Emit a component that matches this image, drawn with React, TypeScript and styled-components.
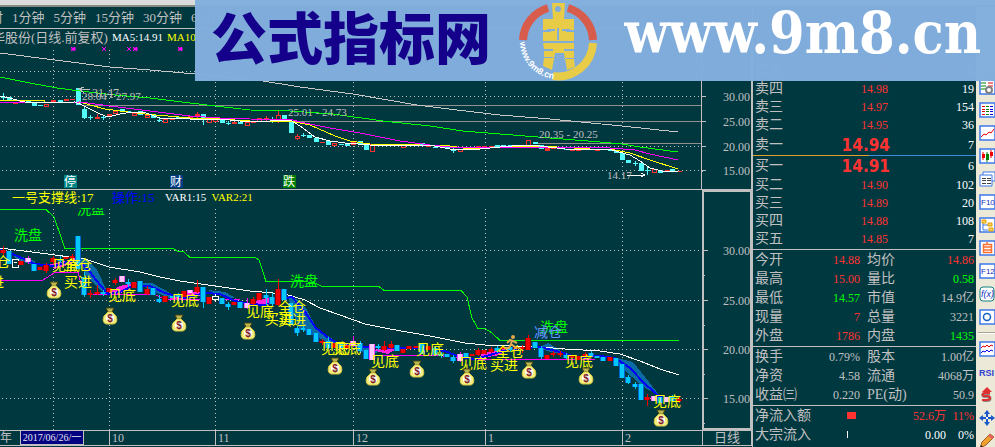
import React from "react";
import styled, { createGlobalStyle } from "styled-components";

const terminalFont = `"Liberation Serif", "Noto Sans CJK SC", serif`;
const bg = "#003840";
const line = "#c0c0c0";

const Global = createGlobalStyle`
  *, *::before, *::after { box-sizing: border-box; }
  html, body { margin: 0; background: ${bg}; }
  body { height: 100vh; overflow: hidden; font-family: ${terminalFont}; font-size: 12px; color: ${line}; }
`;

const Terminal = styled.main`
  position: relative;
  display: grid;
  grid-template-columns: minmax(0, 1fr) 224px 19px;
  grid-template-rows: 7px minmax(0, 1fr);
  height: 100vh;
  overflow: hidden;
  background: ${bg};
`;
const WindowEdge = styled.div`
  grid-column: 1 / -1;
  background: #dcdcdc;
  border-bottom: 2px solid #85897f;
`;
const ChartColumn = styled.section`
  min-width: 0;
`;

/* period toolbar and titles */
const Toolbar = styled.nav`
  display: flex;
  align-items: center;
  gap: 9px;
  height: 22px;
  overflow: hidden;
  border-bottom: 1px solid ${line};
`;
const PeriodButton = styled.button`
  flex: none;
  padding: 0;
  border: 0;
  background: none;
  color: ${line};
  font: 13px/20px ${terminalFont};
  white-space: nowrap;
  cursor: pointer;
  &:first-child { margin-left: -23px; }
`;
const StockTitle = styled.header`
  display: flex;
  gap: 4px;
  height: 17px;
  overflow: hidden;
  font-size: 11px;
  line-height: 17px;
  white-space: nowrap;
`;
const StockName = styled.h1`
  margin: 0 0 0 -8px;
  font: 13px/17px ${terminalFont};
`;
const Reading = styled.span<{ $color: string }>`
  color: ${(p) => p.$color};
`;
const IndicatorRow = styled.div`
  display: grid;
  grid-template-columns: minmax(0, 1fr) 50px;
  height: 19px;
  border-top: 1px solid ${line};
`;
const IndicatorTitle = styled.div`
  display: flex;
  gap: 5px;
  padding-left: 12px;
  overflow: hidden;
  font-size: 11px;
  line-height: 15px;
  white-space: nowrap;
`;
const IndicatorName = styled.span<{ $color: string; $w: number }>`
  min-width: ${(p) => p.$w}px;
  color: ${(p) => p.$color};
  font-size: 13px;
`;
const ScaleCap = styled.div`
  border: 2px solid ${line};
  border-bottom: 0;
`;
const Chart = styled.svg`
  display: block;
  width: 100%;
  height: auto;
  font-family: ${terminalFont};
`;

/* time axis */
const TimeAxis = styled.div`
  display: grid;
  grid-template-columns: 20fr 64fr 25fr 106fr 138fr 132fr 137fr 80fr 50px;
  height: 16px;
  border-top: 1px solid ${line};
  border-bottom: 1px solid ${line};
  font-size: 12px;
  line-height: 14px;
`;
const Month = styled.span<{ $line?: boolean }>`
  min-width: 0;
  padding-left: ${(p) => (p.$line ? "2px" : "0")};
  border-left: ${(p) => (p.$line ? `1px solid ${line}` : "0")};
  overflow: hidden;
`;
const CursorDate = styled.span`
  border: 1px solid ${line};
  border-top: 0;
  background: #000080;
  color: #e8e8f0;
  font-size: 10px;
  text-align: center;
  white-space: nowrap;
  overflow: hidden;
`;
const PeriodLabel = styled.span`
  border-left: 1px solid ${line};
  border-right: 1px solid ${line};
  text-align: center;
  font-size: 13px;
`;

/* quote panel */
const QuotePanel = styled.aside`
  padding-top: 55px;
  border-left: 1px solid ${line};
  overflow: hidden;
`;
const Group = styled.div`
  padding-bottom: 1px;
  border-bottom: 1px solid ${line};
`;
const Table = styled.table`
  width: 100%;
  table-layout: fixed;
  border-collapse: collapse;
`;
const Row = styled.tr<{ $h: number }>`
  height: ${(p) => p.$h}px;
`;
const Label = styled.th<{ $w?: string; $second?: boolean }>`
  width: ${(p) => p.$w || "auto"};
  padding: 0 0 0 ${(p) => (p.$second ? "5px" : "2px")};
  color: ${line};
  font: 14px/18px ${terminalFont};
  text-align: left;
  white-space: nowrap;
`;
const Value = styled.td<{ $color?: string; $w?: string; $big?: boolean }>`
  width: ${(p) => p.$w || "auto"};
  padding: 0 ${(p) => (p.$big ? "0" : "2px")} 0 0;
  color: ${(p) => p.$color || line};
  font: ${(p) => (p.$big ? `bold 17px/18px "DejaVu Sans Condensed", "DejaVu Sans", sans-serif` : `12px/18px ${terminalFont}`)};
  text-align: right;
  white-space: nowrap;
`;
const Pressure = styled.div`
  display: grid;
  grid-template-columns: 52fr 48fr;
  height: 1px;
`;
const PressurePart = styled.span<{ $color: string }>`
  background: ${(p) => p.$color};
`;
const FlowBar = styled.span<{ $w: number; $color: string }>`
  display: inline-block;
  width: ${(p) => p.$w}px;
  height: 7px;
  background: ${(p) => p.$color};
`;
const FlowCell = styled.td`
  width: 46px;
  padding: 0;
`;

/* tool rail */
const ToolRail = styled.nav`
  display: flex;
  flex-direction: column;
  align-items: flex-end;
  gap: 7px;
  padding-top: 72px;
  background: #ece9d8;
  overflow: hidden;
`;
const ToolButton = styled.button`
  flex: none;
  width: 16px;
  height: 16px;
  padding: 0;
  border: 0;
  background: none;
  cursor: pointer;
  svg { display: block; }
`;
const RailRule = styled.hr`
  flex: none;
  width: 17px;
  height: 2px;
  margin: 0;
  border: 0;
  border-top: 1px solid #a8a594;
  background: #fff;
`;

/* site banner */
const Banner = styled.a`
  position: absolute;
  top: 0;
  right: 0;
  left: 195px;
  display: flex;
  align-items: center;
  justify-content: space-between;
  height: 81px;
  padding: 0 14px 0 16px;
  overflow: hidden;
  background: rgba(130, 174, 221, 0.98);
  text-decoration: none;
  white-space: nowrap;
`;
const SiteName = styled.strong`
  margin-bottom: 12px;
  color: #14008a;
  font: 900 56px/60px "Noto Sans CJK SC", sans-serif;
`;
const SiteAddress = styled.strong`
  margin-bottom: 16px;
  color: #fff;
  font: bold 57px/60px "DejaVu Serif Condensed", "DejaVu Serif", serif;
`;

type Candle = [number, number, number, string, number?, number?];

const upperCandles: Candle[] = [
  [3, 97, 98, "c", 93, 100], [9, 97, 101, "c"], [15, 102, 104, "r"], [21, 100, 103, "r"], [28, 100, 103, "c"], [34, 102, 106, "c"],
  [40, 105, 106, "c"], [46, 104, 106, "o"], [53, 100, 103, "r"], [60, 100, 102, "c"], [66, 99, 101, "r"], [72, 99, 100, "r"],
  [78, 88, 105, "c"], [84, 109, 118, "c", 106, 119], [90, 117, 118, "c", 115, 120], [97, 117, 119, "r", 114, 119], [103, 117, 118, "c", 115, 120],
  [109, 114, 117, "r"], [115, 111, 113, "o"], [122, 109, 112, "c"], [128, 111, 113, "c"], [134, 113, 115, "o"], [140, 111, 115, "c"],
  [147, 115, 117, "o"], [153, 115, 118, "c"], [159, 120, 121, "c", 118, 122], [165, 119, 122, "o"], [172, 119, 120, "r"], [178, 117, 119, "c"],
  [184, 118, 119, "c"], [190, 116, 119, "r"], [197, 114, 117, "r", 112, 118], [203, 114, 120, "c", 114, 125], [209, 119, 122, "o"],
  [215, 119, 121, "o"], [222, 120, 123, "c"], [228, 123, 124, "c", 121, 125], [234, 122, 124, "r"], [240, 122, 124, "c"], [247, 122, 125, "o"],
  [253, 121, 123, "r"], [259, 118, 121, "o"], [266, 118, 120, "r", 116, 122], [272, 120, 121, "c", 117, 123], [278, 115, 120, "o", 111, 123],
  [284, 115, 121, "c"], [291, 121, 133, "c"], [297, 136, 138, "o", 134, 140], [303, 135, 136, "c", 133, 137], [309, 135, 138, "c"],
  [316, 138, 142, "c"], [322, 142, 143, "r"], [328, 141, 145, "c"], [334, 143, 145, "o"], [341, 144, 145, "c"], [347, 144, 146, "c"],
  [353, 142, 144, "o"], [360, 141, 145, "c"], [366, 145, 150, "c"], [372, 144, 151, "o"], [378, 145, 146, "c"], [384, 145, 146, "r"],
  [391, 144, 146, "r"], [397, 144, 146, "c"], [403, 145, 147, "o"], [409, 144, 146, "r"], [416, 144, 145, "c"], [422, 143, 146, "c"],
  [428, 145, 147, "r"], [435, 147, 148, "c"], [441, 146, 147, "r"], [447, 147, 148, "c"], [453, 150, 151, "c", 148, 153], [460, 149, 151, "o"],
  [466, 148, 149, "c"], [472, 147, 148, "c"], [478, 146, 147, "r"], [484, 146, 148, "r"], [491, 146, 148, "r"], [497, 145, 147, "c"],
  [503, 145, 147, "c"], [510, 145, 147, "c"], [516, 146, 147, "c"], [522, 145, 147, "r"], [528, 140, 145, "o"], [535, 142, 144, "c"],
  [541, 145, 149, "c"], [547, 148, 151, "r"], [553, 147, 149, "r"], [560, 148, 149, "r"], [566, 149, 150, "c"], [572, 149, 151, "r"],
  [578, 149, 151, "r"], [585, 149, 150, "r"], [591, 149, 150, "c"], [597, 149, 151, "r"], [603, 149, 150, "c"], [610, 149, 151, "c"],
  [616, 151, 153, "c"], [622, 153, 160, "c"], [628, 160, 163, "c"], [635, 163, 164, "c", 161, 166], [641, 163, 171, "c"],
  [647, 170, 171, "c", 167, 175], [654, 169, 172, "o"], [660, 171, 173, "c"], [667, 170, 172, "r"], [672, 169, 171, "c"], [679, 171, 172, "r"],
];

const lowerCandles: Candle[] = [
  [3, 250, 253, "r", 246, 255], [9, 251, 264, "c"], [15, 259, 268, "w"], [21, 261, 265, "r"], [28, 258, 262, "p", 256, 264], [34, 264, 271, "c"],
  [40, 267, 270, "r"], [46, 265, 271, "r", 263, 273], [53, 258, 262, "r", 256, 264], [60, 259, 261, "c", 256, 263], [66, 257, 259, "r"],
  [72, 256, 258, "r", 254, 260], [78, 236, 269, "c"], [84, 277, 295, "c", 272, 297], [90, 293, 295, "r", 290, 298], [97, 292, 294, "r", 285, 295],
  [103, 292, 294, "c", 290, 296], [109, 288, 292, "r"], [115, 280, 283, "r", 278, 285], [122, 276, 282, "p"], [128, 282, 284, "c", 279, 287],
  [134, 282, 288, "r"], [140, 281, 292, "c"], [147, 289, 294, "r", 286, 295], [153, 288, 295, "c"], [159, 299, 302, "c", 295, 303],
  [165, 296, 302, "r"], [172, 296, 298, "c"], [178, 295, 297, "c", 293, 300], [184, 291, 297, "r"], [190, 290, 293, "p"], [197, 287, 292, "r", 280, 293],
  [203, 287, 302, "c", 287, 308], [209, 297, 304, "r"], [215, 296, 300, "w", 294, 302], [222, 298, 304, "c"], [228, 304, 307, "c", 302, 310],
  [234, 302, 305, "r"], [240, 302, 308, "c"], [247, 303, 308, "p", 298, 309], [253, 299, 304, "r", 297, 305], [259, 293, 300, "r"],
  [266, 295, 298, "c", 289, 305], [272, 297, 304, "c", 293, 306], [278, 289, 305, "r", 279, 306], [284, 289, 300, "c"], [291, 303, 325, "c"],
  [297, 328, 333, "c", 326, 336], [303, 328, 330, "c", 326, 332], [309, 329, 335, "c"], [316, 333, 342, "c"], [322, 341, 343, "r", 339, 345],
  [328, 341, 348, "c", 337, 349], [334, 343, 348, "r"], [341, 343, 348, "c"], [347, 345, 349, "r"], [353, 341, 346, "p", 336, 347],
  [360, 343, 351, "c", 341, 353], [366, 350, 359, "c"], [372, 344, 360, "p"], [378, 346, 348, "c", 344, 350], [384, 346, 350, "r", 341, 351],
  [391, 344, 348, "r", 341, 349], [397, 345, 351, "c"], [403, 349, 353, "r"], [409, 346, 349, "r"], [416, 346, 348, "r"], [422, 344, 354, "c"],
  [428, 346, 350, "r"], [435, 348, 355, "c", 346, 356], [441, 354, 356, "c", 352, 358], [447, 354, 357, "c"], [453, 357, 361, "c", 355, 363],
  [460, 354, 361, "p", 352, 362], [466, 353, 357, "c"], [472, 354, 356, "r"], [478, 350, 355, "r", 348, 356], [484, 350, 354, "r"],
  [491, 349, 352, "r", 347, 353], [497, 348, 351, "c", 346, 353], [503, 347, 349, "r"], [510, 347, 350, "c", 345, 352], [516, 347, 349, "r"],
  [522, 347, 349, "r", 345, 353], [528, 338, 350, "r", 335, 350], [535, 342, 348, "c"], [541, 348, 357, "c", 346, 359], [547, 355, 359, "r"],
  [553, 353, 355, "r", 351, 357], [560, 353, 355, "r", 351, 357], [566, 355, 358, "c", 353, 359], [572, 356, 358, "r"], [578, 356, 360, "r"],
  [585, 354, 357, "r", 352, 358], [591, 353, 356, "c", 351, 357], [597, 356, 358, "c"], [603, 357, 361, "c"], [610, 357, 361, "r"],
  [616, 358, 366, "c"], [622, 364, 378, "c"], [628, 377, 383, "c", 375, 384], [635, 384, 387, "c", 382, 389], [641, 384, 400, "c"],
  [647, 397, 400, "r", 394, 406], [654, 396, 401, "p"], [660, 397, 403, "c"], [667, 397, 402, "p"], [672, 396, 401, "c", 395, 402], [679, 399, 401, "r", 397, 403],
];

const paint: Record<string, string> = { c: "#54fcfc", r: "#ff3232", o: "#ff3232" };
const lowerPaint: Record<string, string> = { c: "#00c8ff", r: "#f00000", p: "#ffc8ff", w: "#ffffff" };

const UpperCandle = ({ d: [x, top, bottom, kind, hi = top, lo = bottom] }: { d: Candle }) => (
  <g fill={paint[kind]}>
    <rect x={x} y={hi} width="1" height={lo - hi} />
    {kind === "o" ? (
      <rect x={x - 1.5} y={top + 0.5} width="4" height={bottom - top} fill={bg} stroke={paint.o} />
    ) : (
      <rect x={x - 2} y={top} width="5" height={Math.max(1, bottom - top)} />
    )}
  </g>
);

const LowerCandle = ({ d: [x, top, bottom, kind, hi = top, lo = bottom] }: { d: Candle }) => (
  <g fill={kind === "p" ? "#ff00ff" : lowerPaint[kind]}>
    <rect x={x} y={hi} width="1" height={lo - hi} />
    {kind === "w" ? (
      <>
        <rect x={x - 2.5} y={top + 0.5} width="6" height={bottom - top - 1} fill={bg} stroke="#fff" />
        <rect x={x - 1} y={top + 3} width="3" height="1" />
      </>
    ) : (
      <>
        <rect x={x - 3} y={top} width="6" height={bottom - top} fill={kind === "c" ? "#0064d0" : kind === "r" ? "#900000" : "#ff50ff"} />
        <rect x={x - 2} y={top} width="4" height={bottom - top} fill={lowerPaint[kind]} />
      </>
    )}
  </g>
);

const Grid = ({ rows, top, bottom }: { rows: number[]; top: number; bottom: number }) => (
  <g stroke={line} strokeDasharray="1 3">
    {[53.5, 109.5, 215.5, 353.5, 485.5, 622.5].map((x) => (
      <line key={x} x1={x} x2={x} y1={top} y2={bottom} />
    ))}
    {rows.map((y) => (
      <line key={y} x1="2" x2="701" y1={y} y2={y} />
    ))}
  </g>
);

const Scale = ({ rows, prices, x }: { rows: number[]; prices: string[]; x: number }) => (
  <g>
    {rows.map((y, i) => (
      <g key={y}>
        <line x1={x} x2={x + 5} y1={y} y2={y} stroke={line} />
        <line x1={x} x2={x + 2} y1={y + 25} y2={y + 25} stroke={line} />
        {prices[i] && (
          <text x="750" y={y + 4} fontSize="12" fill={line} textAnchor="end">
            {prices[i]}
          </text>
        )}
      </g>
    ))}
  </g>
);

const MoneyBag = ({ x, y }: { x: number; y: number }) => (
  <g transform={`translate(${x} ${y})`}>
    <path d="M-4-8h8l-2 4h-4z" fill="#b8b850" stroke="#4a4010" />
    <path d="M-2-4h4l4 4c2 5 0 8-3 8h-6c-3 0-5-3-3-8z" fill="#f4ee80" stroke="#d8c840" />
    <ellipse cx="0" cy="2" rx="4" ry="4" fill="#fff" />
    <text x="0" y="6" textAnchor="middle" fontFamily="Liberation Sans, sans-serif" fontSize="10" fontWeight="bold" fill="#802020">$</text>
  </g>
);

const bags = [[54, 290], [110, 316], [179, 323], [248, 331], [335, 366], [373, 377], [417, 369], [467, 377], [529, 370], [586, 376], [661, 418]];
const marks: [number, number, string, string][] = [
  [14, 240, "洗盘", "#00ff00"], [77, 214, "洗盘", "#00ff00"], [290, 286, "洗盘", "#00ff00"], [540, 332, "洗盘", "#00ff00"], [534, 337, "减仓", "#6496ff"],
  [-4, 267, "仓", "#ffff00"], [-10, 287, "进", "#ffff00"], [52, 270, "见底", "#ffff00"], [64, 270, "全仓", "#ffff00"], [64, 287, "买进", "#ffff00"],
  [108, 300, "见底", "#ffff00"], [171, 305, "见底", "#ffff00"], [246, 316, "见底", "#ffff00"], [278, 312, "全仓", "#ffff00"], [265, 324, "买进", "#ffff00"],
  [278, 325, "买进", "#ffff00"], [321, 353, "见底", "#ffff00"], [333, 353, "见底", "#ffff00"], [371, 366, "见底", "#ffff00"], [416, 354, "见底", "#ffff00"],
  [459, 368, "见底", "#ffff00"], [496, 357, "全仓", "#ffff00"], [490, 370, "买进", "#ffff00"], [565, 366, "见底", "#ffff00"], [653, 406, "见底", "#ffff00"],
];

const upperRows = [71.5, 96.5, 121.5, 146.5, 170.5];
const lowerRows = [250.5, 300.5, 349.5, 398.5];

const PriceChart = () => (
  <Chart viewBox="0 46 752 143" role="img" aria-label="日线价格图">
    <g fill="none" shapeRendering="crispEdges">
      <Grid rows={upperRows} top={50} bottom={176} />
      <g stroke="#909090">
        <line x1="82" x2="701" y1="105.5" y2="105.5" />
        <line x1="289" x2="701" y1="121.5" y2="121.5" />
        <line x1="533" x2="701" y1="143.5" y2="143.5" />
      </g>
      <g stroke={line}>
        <line x1="701.5" x2="701.5" y1="46" y2="189" />
        <line x1="751.5" x2="751.5" y1="46" y2="189" />
      </g>
      <Scale rows={upperRows} prices={["", "30.00", "25.00", "20.00", "15.00"]} x={701} />
      {upperCandles.map((d) => <UpperCandle key={d[0]} d={d} />)}
      <polyline stroke="#c8c8c8" points="0,53 55,60 110,67 150,70 195,74 263,81 300,87 353,94 417,105 457,110 500,115 550,119 622,126 678,132" />
      <polyline stroke="#00ff00" points="0,77 30,83 57,88 80,91 115,95 150,98 190,103 250,110 290,111 333,114 383,121 430,126 463,131 500,134 550,138 600,142 622,144 640,147 678,152" />
      <polyline stroke="#ffff00" points="0,100 44,100 45,102 80,102 90,105 105,109 120,111 145,114 190,118 220,119 250,121 290,121 310,125 335,136 350,141 370,144 420,145 450,146 470,149 490,148 500,147 540,146 590,149 615,150 630,153 650,160 678,169" />
      <polyline stroke="#ff00ff" points="0,103 80,102 110,106 150,111 190,116 220,118 250,119 293,120 300,122 330,128 360,133 400,141 430,145 450,147 500,147 540,147 610,148 635,150 650,154 678,160" />
      <polyline stroke="#fff" points="0,96 10,98 20,101 30,103 75,102 82,105 100,114 108,117 120,114 132,112 146,113 160,118 190,119 220,119 250,122 290,120 300,126 315,137 330,141 345,143 370,145 400,146 430,145 450,149 480,149 500,147 525,145 540,146 565,149 612,150 630,155 640,161 650,168 662,171 678,171" />
      <polyline stroke="#fff" points="627,175 645,175 641,173 645,175 641,177" />
      <polyline stroke={line} points="90,90 79,89 84,93 79,89 84,87" />
    </g>
    <g fill={line} fontSize="12">
      <text x="92" y="97">31.47</text>
      <text x="82" y="100" fontSize="11">28.04 - 27.97</text>
      <text x="288" y="116" fontSize="11">25.01 - 24.73</text>
      <text x="539" y="138" fontSize="11">20.35 - 20.25</text>
      <text x="607" y="179" fontSize="11">14.17</text>
    </g>
    <g stroke="#ff00ff" fill="#ff00ff">
      {[73, 104, 129, 135, 180].map((x, i) => (
        <g key={x}>
          <path d={`M${x - 2} 47l4 4m0-4l-4 4`} />
          {i !== 1 && i !== 2 && <rect x={x - 1} y="48" width="3" height="2" />}
        </g>
      ))}
    </g>
    <g fontSize="12" fill="#fff">
      <rect x="64" y="175" width="13" height="13" fill="#008484" />
      <text x="64" y="186">停</text>
      <rect x="170" y="175" width="13" height="13" fill="#003c84" />
      <text x="170" y="186">财</text>
      <rect x="283" y="175" width="13" height="13" fill="#008000" />
      <text x="283" y="186">跌</text>
    </g>
  </Chart>
);

const SignalChart = () => (
  <Chart viewBox="0 208 752 222" role="img" aria-label="一号支撑线指标图">
    <g fill="none" shapeRendering="crispEdges">
      <Grid rows={lowerRows} top={209} bottom={430} />
      <path d="M703 208V429H751V208" stroke={line} strokeWidth="2" />
      <Scale rows={lowerRows} prices={["30.00", "25.00", "20.00", "15.00"]} x={703} />
      <g fill="#0a6ca4">
        <path d="M80 258l8 2 9 10 11 23-8-3-14-14zM138 283h14l20 11v5l-20-8zM10 253l25 8v5l-18-6zM208 290l17 2 12 7-20-4z" />
        <path d="M288 295l12 6 7 9 10 19 20 13v5l-18-9-20-10-8-20zM355 347l12 1 12 4-12 3zM538 348l10-5 9 5 8 6-15-2zM613 357l20 5 12 15 15 19-18-10-20-18z" />
      </g>
      <g fill="#ff20e0">
        <path d="M50 264l16-3 14-5v4l-12 5-14 4zM108 293l12-7 18-4-10 8-10 4zM168 298l24-6h18l-12 4-24 4zM246 304l16-5 18-3v4l-14 4zM372 350l14-2 10 1-8 5zM480 354l16-4 12-1-8 6-18 3z" />
      </g>
      <polyline stroke="#00ff00" points="0,209.5 46,209.5 54,217 65,248.5 173,248.5 178,251.5 184,252 190,257.5 255,257.5 259,260 266,281.5 304,281.5 315,283 322,286.5 379,286.5 384,290.5 461,290.5 467,297 472,318 478,328.5 485,328.5 492,333 500,340.5 679,340.5" />
      <polyline stroke="#ff00ff" points="0,280.5 42,280.5 55,272.5 78,272.5 84,294.5 155,294.5 165,299.5 240,299.5" />
      <polyline stroke="#ff00ff" points="372,355.5 440,355.5 450,357 485,359.5 595,359.5" />
      <polyline stroke="#fff" points="0,248 40,253 85,259 109,267 140,272 160,277 180,281 215,286 250,291 285,294 305,300 320,308 340,315 365,324 390,329 430,336 465,343 485,345 541,347 565,349 600,351 620,354 640,361 660,369 679,375" />
      <polyline stroke="#0000ff" strokeWidth="2" points="0,250 15,255 35,264 55,266 70,261 80,262 90,272 100,285 108,294 120,292 135,285 150,286 165,293 185,298 205,293 220,294 235,301 250,304 265,305 280,299 292,297 305,312 316,328 330,339 340,344 365,347 400,348 430,348 445,351 460,357 475,359 490,355 510,349 540,347 560,352 575,357 600,356 615,358 630,368 645,384 660,397 679,400" />
      {lowerCandles.map((d) => <LowerCandle key={d[0]} d={d} />)}
    </g>
    {marks.map(([x, y, label, color]) => (
      <text key={`${x}-${y}`} x={x} y={y} fontSize="14" fill={color}>{label}</text>
    ))}
    {bags.map(([x, y]) => <MoneyBag key={x} x={x} y={y} />)}
    <g fill="none" stroke="#e0a850" strokeWidth="2">
      <circle cx="513" cy="337" r="1" />
      <path d="M512 340l-1 4 4 3 2 2M511 344l-2 4h-4M507 343l3-3 3 1 4 2" />
    </g>
  </Chart>
);

const Logo = () => (
  <svg width="80" height="80" viewBox="0 0 80 80" aria-hidden="true">
    <g fill="none" strokeWidth="8">
      <path d="M5 39A35 35 0 0 1 30 7" stroke="#d85c4c" />
      <path d="M50 7A35 35 0 0 1 75 39" stroke="#d85c4c" />
      <path d="M75 42A35 35 0 0 1 35 75" stroke="#e8cc48" />
    </g>
    <path fillRule="evenodd" fill="#e8cc48" d="M34 2h13l-1 16h10v11h-8v2h8v9H25v-9h8v-2h-8V18h10zM40 5a3 3 0 1 0 0 6 3 3 0 0 0 0-6z" />
    <path fill="#e8cc48" d="M25 42h31v6H46v2h10v7H46v1h10l1 8-8 3-3-17h-9l-3 17-9-4 1-8h9v-1h-9v-6h9v-2h-9z" />
    <path d="M40 27v12M29 29h8M44 29h8" stroke="#82aedd" strokeWidth="2" />
    <path id="ring-text" d="M2 41A38 38 0 0 0 37 78" fill="none" />
    <text fill="#fff" fontFamily="Liberation Sans, sans-serif" fontSize="9" fontWeight="bold">
      <textPath href="#ring-text">www.9m8.cn</textPath>
    </text>
  </svg>
);

const Frame = ({ children }: { children: React.ReactNode }) => (
  <svg width="16" height="16" viewBox="0 0 16 16">
    <rect x="1" y="1" width="15" height="14" fill="#fff" stroke="#3c78e8" strokeWidth="1.5" />
    {children}
  </svg>
);
const glyph = { fontFamily: "Liberation Sans, sans-serif", fontSize: 8, fill: "#1030c0" };

const tools: [string, React.ReactNode][] = [
  ["报价设置", <Frame><path d="M2 4h5M2 7h5M2 10h5" stroke="#008000" /><path d="M9 4h5M9 7h5" stroke="#e00000" /><circle cx="10" cy="11" r="3" fill="none" stroke="#808080" strokeWidth="2" /></Frame>],
  ["行情列表", <Frame><path d="M3 4.500h3M3 7.500h3M3 9.500h3M3 12.500h3" stroke="#e00000" /><path d="M7 4.500h3M7 7.500h3M7 9.500h3M7 12.500h3" stroke="#008000" /><path d="M11 4.500h3M11 7.500h3M11 9.500h3M11 12.500h3" stroke="#0000e0" /></Frame>],
  ["分时图", <Frame><path d="M2 12l3-3 2 1 3-3 2 1 3-4" fill="none" stroke="#f00000" /></Frame>],
  ["K线图", <Frame><path d="M4 4v8M12 2v8" stroke="#f00000" /><path d="M8 4v10" stroke="#008000" /><path d="M3 6h3v4H3zM11 4h3v4h-3z" fill="#f00000" /><path d="M7 6h3v6H7z" fill="#008000" /></Frame>],
  ["多窗口", <svg width="16" height="16"><path d="M4 1h12v9H4z" fill="#fff" stroke="#3c78e8" /><path d="M1 4h12v11H1z" fill="#fff" stroke="#3c78e8" /><path d="M3 7.500h4m1 0h4M3 9.500h4m1 0h4M3 12.500h4m1 0h4" stroke="#444" /></svg>],
  ["基本资料", <Frame><text x="2" y="11" {...glyph}>F10</text></Frame>],
  ["板块", <Frame><path d="M4 5v8h5M4 8h5" fill="none" stroke="#3c78e8" /><path d="M3 3h4v3H3zM9 6h4v3H9zM10 11h4v3h-4z" fill="#ffd060" stroke="#e0a000" /></Frame>],
  ["自选股", <Frame><path d="M4.500 4.500h8v8h-8zM4 7h9M4 10h9M8 2v2" fill="none" stroke="#ff7030" strokeWidth="1.500" /></Frame>],
  ["功能", <Frame><text x="2" y="11" {...glyph}>F12</text></Frame>],
  ["公式", <svg width="16" height="16"><rect x="1" y="1" width="14" height="14" rx="3" fill="#fff" stroke="#108080" /><text x="2" y="11" {...glyph} fontSize="9" fontStyle="italic">f(x)</text></svg>],
  ["圆形", <Frame><circle cx="8" cy="8" r="3.500" fill="none" stroke="#1060c0" strokeWidth="1.500" /></Frame>],
  ["rule", null],
  ["叠加走势", <Frame><path d="M2 7l2-2 2 1 2-2 2 2 2-2 2 1" fill="none" stroke="#e00000" /><path d="M2 12l2-2 2 1 2-2 2 2 2-2 2 1" fill="none" stroke="#0000e0" /></Frame>],
  ["RSI", <svg width="16" height="16"><text x="0" y="12" fontFamily="Liberation Sans, sans-serif" fontSize="9" fontWeight="bold" fill="#3040d0">RSI</text></svg>],
  ["资金", <svg width="16" height="16"><path d="M8 0l5 5H3z" fill="#e03030" /><path d="M11 6.500H6c-3 0-3 3 0 3h2c4 0 4 4 0 4H4" fill="none" stroke="#888" strokeWidth="3" /><path d="M11 6H6c-3 0-3 3 0 3h2c4 0 4 4 0 4H3" fill="none" stroke="#e03030" strokeWidth="2" /></svg>],
  ["移动", <svg width="16" height="16"><path d="M8 0l3 4H5zM8 16l3-4H5zM0 8l4-3v6zM16 8l-4-3v6zM7 4h2v8H7zM4 7h8v2H4z" fill="#1858c8" /><path d="M7 7h2v2H7z" fill="#fff" /></svg>],
  ["画线", <svg width="16" height="16"><path d="M1 15l2-6 8-8 4 3-8 8z" fill="#f0a030" stroke="#a06020" /><path d="M11 1l4 3-2 2-4-3z" fill="#e86060" /><path d="M1 15l1-3 2 2z" fill="#222" /></svg>],
];

const red = "#ff3232";
const green = "#00ff00";
const sells = [["卖五", "14.99", "5"], ["卖四", "14.98", "19"], ["卖三", "14.97", "154"], ["卖二", "14.95", "36"], ["卖一", "14.94", "7"]];
const buys = [["买一", "14.91", "6"], ["买二", "14.90", "102"], ["买三", "14.89", "20"], ["买四", "14.88", "108"], ["买五", "14.85", "7"]];
const session: string[][] = [
  ["今开", "14.88", red, "均价", "14.86", red],
  ["最高", "15.00", red, "量比", "0.58", green],
  ["最低", "14.57", green, "市值", "14.9亿", line],
  ["现量", "7", red, "总量", "3221", line],
  ["外盘", "1786", red, "内盘", "1435", green],
];
const company: string[][] = [
  ["换手", "0.79%", line, "股本", "1.00亿", line],
  ["净资", "4.58", line, "流通", "4068万", line],
  ["收益㈢", "0.220", line, "PE(动)", "50.9", line],
];

const Depth = ({ rows, best, bestHeight }: { rows: string[][]; best: number; bestHeight: number }) => (
  <Table>
    <tbody>
      {rows.map(([label, price, volume], i) => (
        <Row key={label} $h={i === best ? bestHeight : 18}>
          <Label scope="row" $w="50px">{label}</Label>
          <Value $color={red} $big={i === best}>{price}</Value>
          <Value $color="#fff" $w="86px">{volume}</Value>
        </Row>
      ))}
    </tbody>
  </Table>
);

const Stats = ({ rows }: { rows: string[][] }) => (
  <Group>
    <Table>
      <tbody>
        {rows.map(([a, av, ac, b, bv, bc]) => (
          <Row key={a} $h={19}>
            <Label scope="row" $w="55px">{a}</Label>
            <Value $color={ac} $w="54px">{av}</Value>
            <Label scope="row" $w="56px" $second>{b}</Label>
            <Value $color={bc}>{bv}</Value>
          </Row>
        ))}
      </tbody>
    </Table>
  </Group>
);

export default function App() {
  return (
    <Terminal>
      <Global />
      <WindowEdge />
      <ChartColumn>
        <Toolbar aria-label="周期">
          {["分时", "1分钟", "5分钟", "15分钟", "30分钟", "60分钟"].map((p) => (
            <PeriodButton key={p} type="button">{p}</PeriodButton>
          ))}
        </Toolbar>
        <StockTitle>
          <StockName>华股份(日线.前复权)</StockName>
          <Reading $color="#fff">MA5:14.91</Reading>
          <Reading $color="#ffff00">MA10:15.04</Reading>
        </StockTitle>
        <PriceChart />
        <IndicatorRow>
          <IndicatorTitle>
            <IndicatorName $color="#ffff00" $w={95}>一号支撑线:17</IndicatorName>
            <IndicatorName $color="#0000ff" $w={48}>操作:15</IndicatorName>
            <Reading $color="#fff">VAR1:15</Reading>
            <Reading $color="#ffff00">VAR2:21</Reading>
          </IndicatorTitle>
          <ScaleCap />
        </IndicatorRow>
        <SignalChart />
        <TimeAxis>
          <Month>年</Month>
          <CursorDate>2017/06/26/一</CursorDate>
          <Month />
          <Month $line>10</Month>
          <Month $line>11</Month>
          <Month $line>12</Month>
          <Month $line>1</Month>
          <Month $line>2</Month>
          <PeriodLabel>日线</PeriodLabel>
        </TimeAxis>
      </ChartColumn>
      <QuotePanel>
        <Depth rows={sells} best={4} bestHeight={21} />
        <Pressure>
          <PressurePart $color="#e0a030" />
          <PressurePart $color="#3c8ce0" />
        </Pressure>
        <Group>
          <Depth rows={buys} best={0} bestHeight={20} />
        </Group>
        <Stats rows={session} />
        <Stats rows={company} />
        <Table>
          <tbody>
            <Row $h={19}>
              <Label scope="row" $w="94px">净流入额</Label>
              <FlowCell><FlowBar $w={9} $color={red} /></FlowCell>
              <Value $color={red}>52.6万</Value>
              <Value $color={red} $w="28px">11%</Value>
            </Row>
            <Row $h={19}>
              <Label scope="row">大宗流入</Label>
              <FlowCell><FlowBar $w={1} $color="#fff" /></FlowCell>
              <Value $color="#fff">0.00</Value>
              <Value $color="#fff">0%</Value>
            </Row>
          </tbody>
        </Table>
      </QuotePanel>
      <ToolRail aria-label="工具">
        {tools.map(([name, icon]) =>
          icon ? <ToolButton key={name} type="button" aria-label={name}>{icon}</ToolButton> : <RailRule key={name} />
        )}
      </ToolRail>
      <Banner href="#">
        <SiteName>公式指标网</SiteName>
        <Logo />
        <SiteAddress>www.9m8.cn</SiteAddress>
      </Banner>
    </Terminal>
  );
}
